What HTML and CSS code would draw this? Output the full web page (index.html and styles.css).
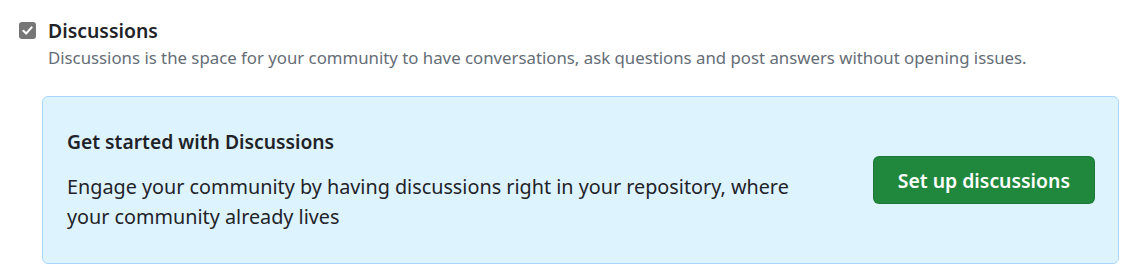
FILE: index.html
```html
<!DOCTYPE html>
<html lang="en">
<head>
    <meta charset="UTF-8">
    <title>Features</title>
    <link rel="stylesheet" href="styles.css">
</head>
<body>
    <div class="feature">
        <div class="feature-head">
            <span class="checkbox">
                <svg width="11" height="11" viewBox="0 0 16 16"><path d="M2 8.5l4 4 8-9" fill="none" stroke="#fff" stroke-width="3" stroke-linecap="round" stroke-linejoin="round"/></svg>
            </span>
            <span class="feature-title">Discussions</span>
        </div>
        <p class="feature-desc">Discussions is the space for your community to have conversations, ask questions and post answers without opening issues.</p>

        <div class="promo">
            <div class="promo-text">
                <h3>Get started with Discussions</h3>
                <p>Engage your community by having discussions right in your repository, where your community already lives</p>
            </div>
            <button class="btn-primary">Set up discussions</button>
        </div>
    </div>
</body>
</html>
```

FILE: styles.css
```css
body {
    margin: 0;
    padding: 0;
    background-color: #fff;
    font-family: "Noto Sans", sans-serif;
    color: #1f2328;
}
.feature {
    padding: 16px 18px 0 19px;
}
.feature-head {
    display: flex;
    align-items: center;
    gap: 12px;
    height: 28px;
}
.checkbox {
    width: 17px;
    height: 17px;
    border-radius: 3px;
    background-color: #767676;
    display: flex;
    align-items: center;
    justify-content: center;
}
.feature-title {
    font-size: 19.4px;
    font-weight: 600;
}
.feature-desc {
    margin: 2px 0 0 29px;
    font-size: 16.8px;
    line-height: 24px;
    color: #656d76;
}
.promo {
    margin: 26px 0 0 23px;
    background-color: #ddf4ff;
    border: 1px solid #a8d7fb;
    border-radius: 6px;
    padding: 31px 23px 31px 24px;
    display: flex;
    align-items: center;
    justify-content: space-between;
}
.promo h3 {
    margin: 0 0 16px;
    font-size: 19.3px;
    font-weight: 600;
    line-height: 28px;
}
.promo p {
    margin: 0;
    font-size: 19.8px;
    line-height: 30px;
    max-width: 740px;
}
.btn-primary {
    font-family: inherit;
    font-size: 19.4px;
    font-weight: 600;
    color: #fff;
    background-color: #1f883d;
    border: 1px solid rgba(31, 35, 40, 0.15);
    border-radius: 6px;
    height: 48px;
    padding: 0 24px;
    cursor: pointer;
}
```
